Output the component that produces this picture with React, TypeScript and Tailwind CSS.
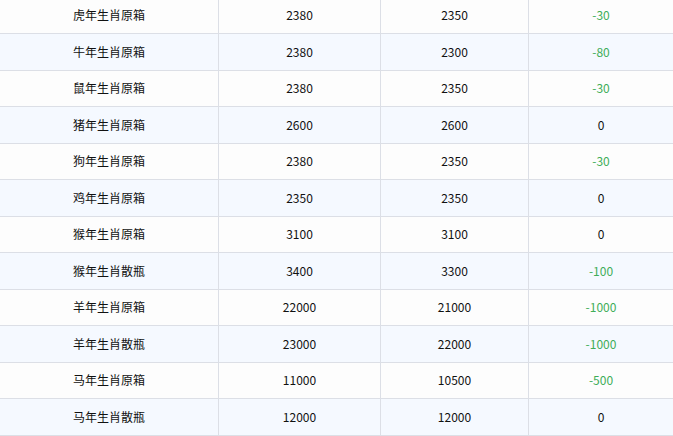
import React from "react";

const rows: [string, string, string, string][] = [
  ["虎年生肖原箱", "2380", "2350", "-30"],
  ["牛年生肖原箱", "2380", "2300", "-80"],
  ["鼠年生肖原箱", "2380", "2350", "-30"],
  ["猪年生肖原箱", "2600", "2600", "0"],
  ["狗年生肖原箱", "2380", "2350", "-30"],
  ["鸡年生肖原箱", "2350", "2350", "0"],
  ["猴年生肖原箱", "3100", "3100", "0"],
  ["猴年生肖散瓶", "3400", "3300", "-100"],
  ["羊年生肖原箱", "22000", "21000", "-1000"],
  ["羊年生肖散瓶", "23000", "22000", "-1000"],
  ["马年生肖原箱", "11000", "10500", "-500"],
  ["马年生肖散瓶", "12000", "12000", "0"],
];

export default function App() {
  return (
    <div
      className="w-[673px] h-[436px] overflow-hidden bg-white text-[12px] text-[#111]"
      style={{ fontFamily: '"Noto Sans CJK SC", "Noto Sans", sans-serif' }}
    >
      <div className="-mt-[2.5px]">
        {rows.map((r, i) => (
          <div
            key={i}
            className={`flex h-[36.5px] border-b border-[#dcdfe6] ${i % 2 === 1 ? "bg-[#f5f9ff]" : "bg-[#fdfdfd]"}`}
          >
            <div className="w-[219px] flex items-center justify-center border-r border-[#dcdfe6]">{r[0]}</div>
            <div className="w-[162px] flex items-center justify-center border-r border-[#dcdfe6]">{r[1]}</div>
            <div className="w-[148px] flex items-center justify-center border-r border-[#dcdfe6]">{r[2]}</div>
            <div className={`w-[144px] flex items-center justify-center ${r[3] !== "0" ? "text-[#40ad58]" : ""}`}>{r[3]}</div>
          </div>
        ))}
      </div>
    </div>
  );
}
